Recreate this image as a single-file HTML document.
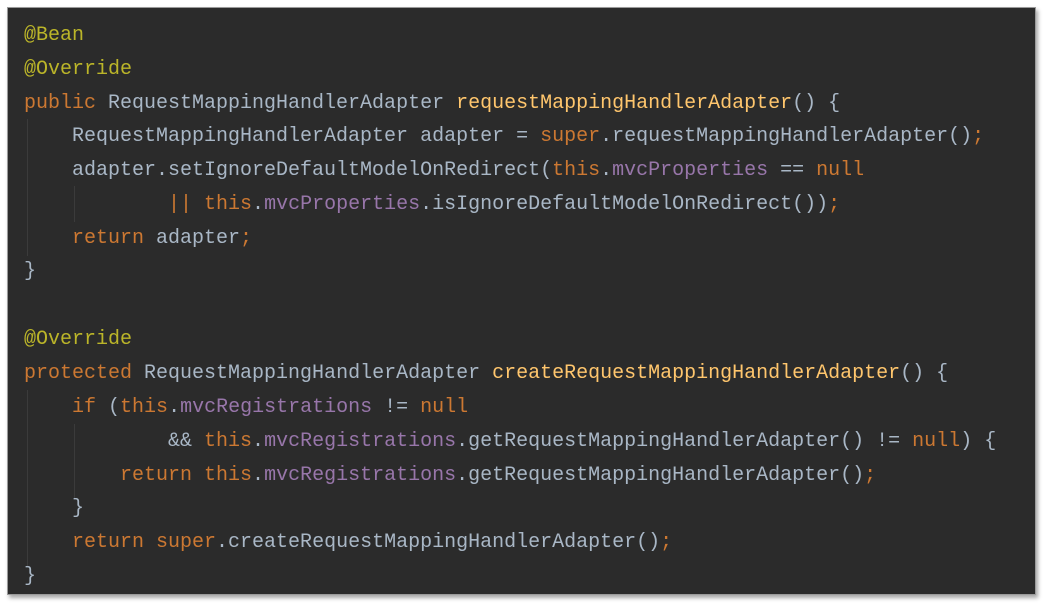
<!DOCTYPE html><html><head><style>
body{margin:0;width:1048px;height:607px;background:#fff;overflow:hidden;position:relative}
#p{position:absolute;left:7px;top:7px;width:1027px;height:586px;background:#2b2b2b;border:1px solid #9a9a9a;box-shadow:2px 3px 4px rgba(0,0,0,.35)}
.l{position:absolute;left:16px;font:20px/24px "Liberation Mono",monospace;color:#a9b7c6;white-space:pre}
.a{color:#bbb529}.k{color:#cc7832}.f{color:#9876aa}.m{color:#ffc66d}
.g{position:absolute;width:1px;background:#3b3b3b}
</style></head><body><div id="p">
<div class="g" style="left:19px;top:111px;height:137px"></div>
<div class="g" style="left:66px;top:178px;height:36px"></div>
<div class="g" style="left:19px;top:382px;height:177px"></div>
<div class="g" style="left:66px;top:416px;height:74px"></div>
<div class="l" style="top:16px"><span class="a">@Bean</span></div>
<div class="l" style="top:50px"><span class="a">@Override</span></div>
<div class="l" style="top:84px"><span class="k">public </span>RequestMappingHandlerAdapter <span class="m">requestMappingHandlerAdapter</span>() {</div>
<div class="l" style="top:117px">    RequestMappingHandlerAdapter adapter = <span class="k">super</span>.requestMappingHandlerAdapter()<span class="k">;</span></div>
<div class="l" style="top:151px">    adapter.setIgnoreDefaultModelOnRedirect(<span class="k">this</span>.<span class="f">mvcProperties</span> == <span class="k">null</span></div>
<div class="l" style="top:185px">            <span class="k">|| this</span>.<span class="f">mvcProperties</span>.isIgnoreDefaultModelOnRedirect())<span class="k">;</span></div>
<div class="l" style="top:219px">    <span class="k">return </span>adapter<span class="k">;</span></div>
<div class="l" style="top:252px">}</div>
<div class="l" style="top:320px"><span class="a">@Override</span></div>
<div class="l" style="top:354px"><span class="k">protected </span>RequestMappingHandlerAdapter <span class="m">createRequestMappingHandlerAdapter</span>() {</div>
<div class="l" style="top:388px">    <span class="k">if </span>(<span class="k">this</span>.<span class="f">mvcRegistrations</span> != <span class="k">null</span></div>
<div class="l" style="top:422px">            &amp;&amp; <span class="k">this</span>.<span class="f">mvcRegistrations</span>.getRequestMappingHandlerAdapter() != <span class="k">null</span>) {</div>
<div class="l" style="top:456px">        <span class="k">return this</span>.<span class="f">mvcRegistrations</span>.getRequestMappingHandlerAdapter()<span class="k">;</span></div>
<div class="l" style="top:489px">    }</div>
<div class="l" style="top:523px">    <span class="k">return super</span>.createRequestMappingHandlerAdapter()<span class="k">;</span></div>
<div class="l" style="top:557px">}</div>
</div></body></html>
